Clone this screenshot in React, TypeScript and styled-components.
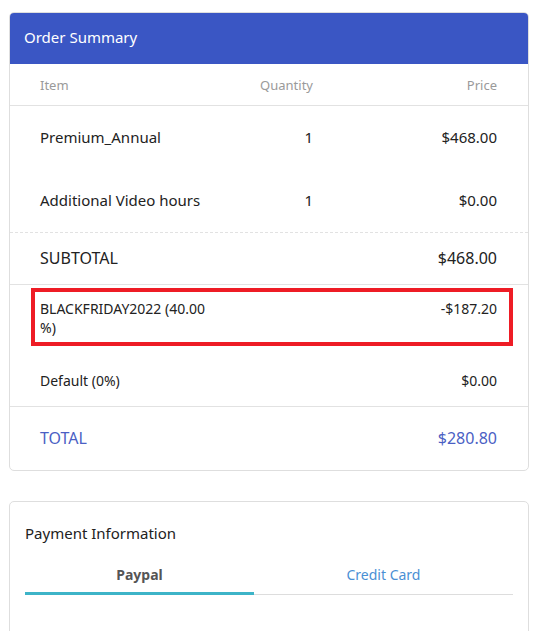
import styled, { createGlobalStyle } from "styled-components";

const GlobalStyle = createGlobalStyle`
  body {
    margin: 0;
    background: #fff;
    font-family: "Noto Sans", "Open Sans", sans-serif;
    color: #222;
  }
`;

type Line = { label: string; qty?: string; price: string };

const items: Line[] = [
  { label: "Premium_Annual", qty: "1", price: "$468.00" },
  { label: "Additional Video hours", qty: "1", price: "$0.00" },
];

const App = () => {
  return (
    <Page>
      <GlobalStyle />
      <Card>
        <CardHeader>Order Summary</CardHeader>
        <GridRow $height={41} $border="solid">
          <HeadCell>Item</HeadCell>
          <HeadCell $align="right">Quantity</HeadCell>
          <HeadCell $align="right">Price</HeadCell>
        </GridRow>
        {items.map((item, i) => (
          <GridRow
            key={item.label}
            $height={63}
            $border={i === items.length - 1 ? "dashed" : "none"}
          >
            <Cell>{item.label}</Cell>
            <Cell $align="right">{item.qty}</Cell>
            <Cell $align="right">{item.price}</Cell>
          </GridRow>
        ))}
        <SplitRow $height={52} $size={16} $border="solid">
          <Cell>SUBTOTAL</Cell>
          <Cell $align="right">$468.00</Cell>
        </SplitRow>
        <SplitRow $height={69} $size={14} $highlight>
          <Cell $wrap>BLACKFRIDAY2022 (40.00 %)</Cell>
          <Cell $align="right">-$187.20</Cell>
        </SplitRow>
        <SplitRow $height={53} $size={14} $border="solid">
          <Cell>Default (0%)</Cell>
          <Cell $align="right">$0.00</Cell>
        </SplitRow>
        <SplitRow $height={63} $size={16} $total>
          <Cell>TOTAL</Cell>
          <Cell $align="right">$280.80</Cell>
        </SplitRow>
      </Card>

      <PaymentCard>
        <PaymentTitle>Payment Information</PaymentTitle>
        <Tabs>
          <Tab $active>Paypal</Tab>
          <Tab>Credit Card</Tab>
        </Tabs>
      </PaymentCard>
    </Page>
  );
};

const Page = styled.div`
  padding: 12px 12px 0 9px;
  display: flex;
  flex-direction: column;
  gap: 30px;
`;

const Card = styled.section`
  width: 520px;
  box-sizing: border-box;
  border: 1px solid #dedede;
  border-radius: 5px;
  overflow: hidden;
  background: #fff;
`;

const CardHeader = styled.header`
  background: #3a56c4;
  color: #fff;
  font-size: 15px;
  height: 52px;
  margin: -1px -1px 0;
  padding: 0 15px 2px;
  display: flex;
  align-items: center;
  box-sizing: border-box;
`;

const GridRow = styled.div<{ $height: number; $border?: "solid" | "dashed" | "none" }>`
  display: grid;
  grid-template-columns: 1fr 90px 184px;
  align-items: center;
  height: ${(p) => p.$height}px;
  padding: 0 31px 0 30px;
  border-bottom: 1px ${(p) => p.$border ?? "none"} #e2e2e2;
  font-size: 15px;
`;

const SplitRow = styled.div<{
  $height: number;
  $size: number;
  $border?: "solid" | "none";
  $highlight?: boolean;
  $total?: boolean;
}>`
  position: relative;
  display: grid;
  grid-template-columns: 220px 1fr;
  align-items: ${(p) => (p.$highlight ? "start" : "center")};
  height: ${(p) => p.$height}px;
  box-sizing: border-box;
  padding: ${(p) => (p.$highlight ? "14px 31px 0 30px" : "0 31px 0 30px")};
  border-bottom: 1px ${(p) => p.$border ?? "none"} #e2e2e2;
  font-size: ${(p) => p.$size}px;
  color: ${(p) => (p.$total ? "#4b5fc4" : "#222")};

  ${(p) =>
    p.$highlight &&
    `
    &::after {
      content: "";
      position: absolute;
      left: 21px;
      right: 15px;
      top: 3px;
      height: 58px;
      box-sizing: border-box;
      border: 4px solid #ee1c25;
    }
  `}
`;

const HeadCell = styled.div<{ $align?: "left" | "right" }>`
  font-size: 13px;
  color: #9a9a9a;
  text-align: ${(p) => p.$align ?? "left"};
`;

const Cell = styled.div<{ $align?: "left" | "right"; $wrap?: boolean }>`
  line-height: 19px;
  text-align: ${(p) => p.$align ?? "left"};
  padding-right: ${(p) => (p.$wrap ? "40px" : "0")};
`;

const PaymentCard = styled.section`
  width: 520px;
  height: 140px;
  box-sizing: border-box;
  border: 1px solid #dedede;
  border-radius: 5px;
  padding: 21px 15px 0 15px;
`;

const PaymentTitle = styled.h2`
  margin: 0 0 22px;
  font-size: 15px;
  font-weight: 400;
  color: #222;
`;

const Tabs = styled.div`
  display: grid;
  grid-template-columns: 229px 1fr;
  border-bottom: 1px solid #ddd;
`;

const Tab = styled.div<{ $active?: boolean }>`
  text-align: center;
  font-size: 14px;
  padding-bottom: 8px;
  font-weight: ${(p) => (p.$active ? 700 : 400)};
  color: ${(p) => (p.$active ? "#555" : "#4a8fd4")};
  border-bottom: 3px solid ${(p) => (p.$active ? "#3db4c8" : "transparent")};
  margin-bottom: -1px;
`;

export default App;
